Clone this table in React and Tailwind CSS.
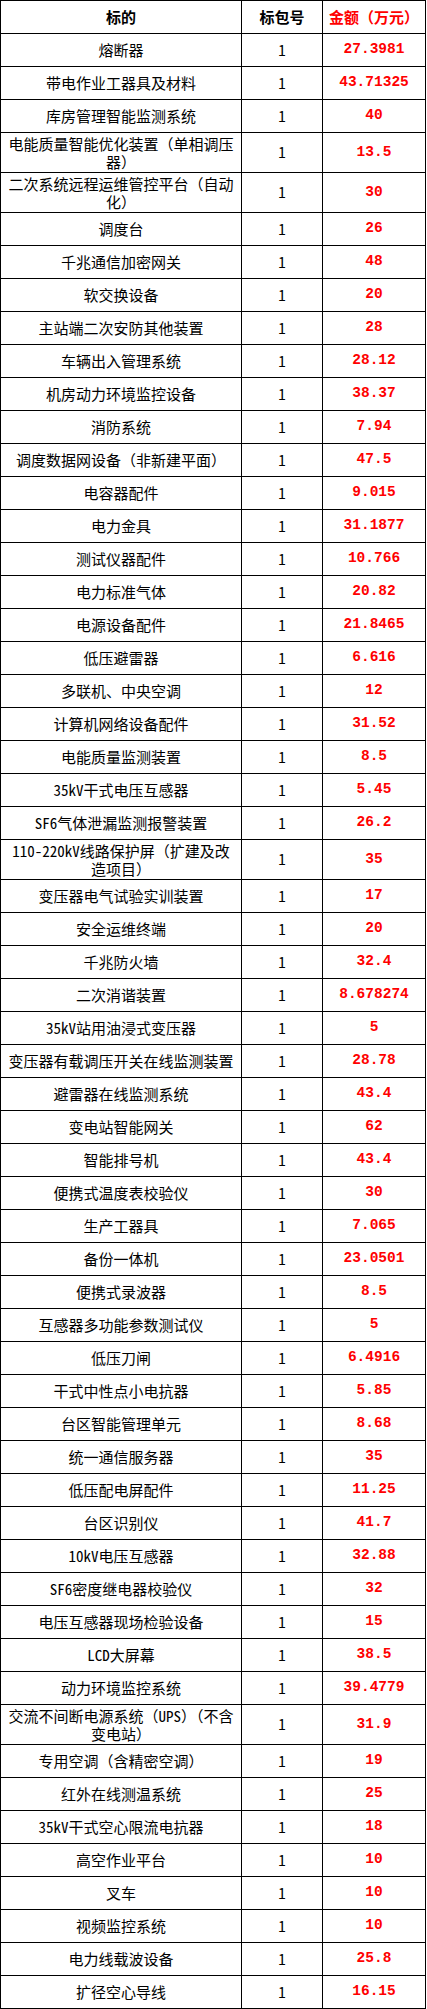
const rows = [
  ['熔断器', '27.3981'],
  ['带电作业工器具及材料', '43.71325'],
  ['库房管理智能监测系统', '40'],
  ['电能质量智能优化装置（单相调压\n器）', '13.5'],
  ['二次系统远程运维管控平台（自动\n化）', '30'],
  ['调度台', '26'],
  ['千兆通信加密网关', '48'],
  ['软交换设备', '20'],
  ['主站端二次安防其他装置', '28'],
  ['车辆出入管理系统', '28.12'],
  ['机房动力环境监控设备', '38.37'],
  ['消防系统', '7.94'],
  ['调度数据网设备（非新建平面）', '47.5'],
  ['电容器配件', '9.015'],
  ['电力金具', '31.1877'],
  ['测试仪器配件', '10.766'],
  ['电力标准气体', '20.82'],
  ['电源设备配件', '21.8465'],
  ['低压避雷器', '6.616'],
  ['多联机、中央空调', '12'],
  ['计算机网络设备配件', '31.52'],
  ['电能质量监测装置', '8.5'],
  ['35kV干式电压互感器', '5.45'],
  ['SF6气体泄漏监测报警装置', '26.2'],
  ['110-220kV线路保护屏（扩建及改\n造项目）', '35'],
  ['变压器电气试验实训装置', '17'],
  ['安全运维终端', '20'],
  ['千兆防火墙', '32.4'],
  ['二次消谐装置', '8.678274'],
  ['35kV站用油浸式变压器', '5'],
  ['变压器有载调压开关在线监测装置', '28.78'],
  ['避雷器在线监测系统', '43.4'],
  ['变电站智能网关', '62'],
  ['智能排号机', '43.4'],
  ['便携式温度表校验仪', '30'],
  ['生产工器具', '7.065'],
  ['备份一体机', '23.0501'],
  ['便携式录波器', '8.5'],
  ['互感器多功能参数测试仪', '5'],
  ['低压刀闸', '6.4916'],
  ['干式中性点小电抗器', '5.85'],
  ['台区智能管理单元', '8.68'],
  ['统一通信服务器', '35'],
  ['低压配电屏配件', '11.25'],
  ['台区识别仪', '41.7'],
  ['10kV电压互感器', '32.88'],
  ['SF6密度继电器校验仪', '32'],
  ['电压互感器现场检验设备', '15'],
  ['LCD大屏幕', '38.5'],
  ['动力环境监控系统', '39.4779'],
  ['交流不间断电源系统（UPS）（不含\n变电站）', '31.9'],
  ['专用空调（含精密空调）', '19'],
  ['红外在线测温系统', '25'],
  ['35kV干式空心限流电抗器', '18'],
  ['高空作业平台', '10'],
  ['叉车', '10'],
  ['视频监控系统', '10'],
  ['电力线载波设备', '25.8'],
  ['扩径空心导线', '16.15'],
]

const body = "font-['Noto_Sans_Mono_CJK_SC','Noto_Sans_CJK_SC',sans-serif]"
const cell = 'flex items-center justify-center text-center border-r border-b border-black'

export default function App() {
  return (
    <div className="bg-white min-h-screen">
      <div className={`w-[426px] border-l border-t border-black text-[15px] text-black ${body}`}>
        <div className="grid grid-cols-[241px_81px_103px] h-[33px] font-bold">
          <div className={cell}>标的</div>
          <div className={cell}>标包号</div>
          <div className={`${cell} text-[#ff0000] whitespace-nowrap`}>金额（万元）</div>
        </div>
        {rows.map(([name, amount], i) => (
          <div key={i} className="grid grid-cols-[241px_81px_103px] min-h-[33px]">
            <div className={`${cell} px-[3px] py-[1.5px] leading-[18px] whitespace-pre-line`}>{name}</div>
            <div className={cell}>1</div>
            <div className={`${cell} text-[#ff0000] font-bold text-[14.5px] font-['Liberation_Mono',monospace]`}>{amount}</div>
          </div>
        ))}
      </div>
    </div>
  )
}
